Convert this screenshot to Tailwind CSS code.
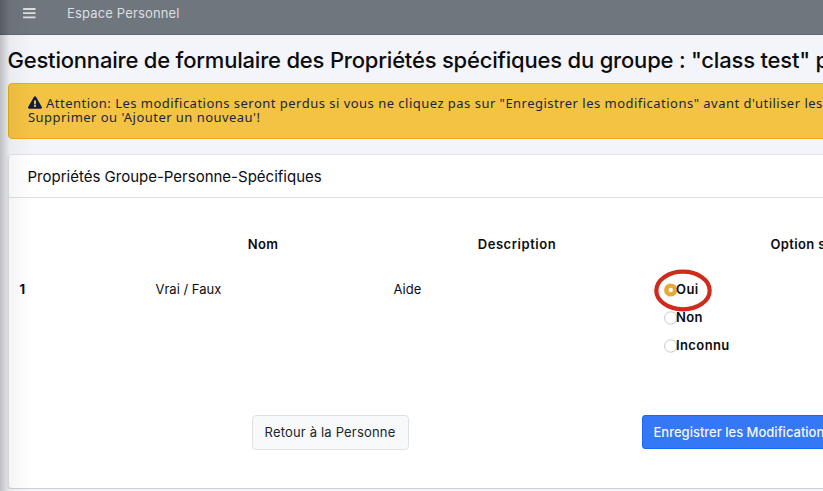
<!DOCTYPE html>
<html lang="fr">
<head>
<meta charset="utf-8">
<title>Espace Personnel</title>
<script src="https://cdn.jsdelivr.net/npm/@tailwindcss/browser@4"></script>
</head>
<body class="relative h-[491px] w-[823px] overflow-hidden bg-[#f4f5fa] font-['Inter',sans-serif] text-[#0b0c0f]">
<header class="flex h-[35px] items-start border-b border-[#63696f] bg-[#6f767d] pl-[23px] pt-[5px] text-[#dcdee0]">
  <svg class="mt-[3px] h-[12px] w-[13px]" viewBox="0 0 13 12" fill="currentColor"><rect y="0" width="12.6" height="1.9" rx=".4"/><rect y="4.2" width="12.6" height="1.9" rx=".4"/><rect y="8.4" width="12.6" height="1.9" rx=".4"/></svg>
  <span class="ml-[31px] whitespace-nowrap text-[13px] leading-[17px] tracking-[0.15px]">Espace Personnel</span>
</header>
<main class="w-[823px] overflow-hidden pl-[7.500px]">
  <h1 class="h-[48px] whitespace-nowrap pt-[11px] text-[22px] font-medium leading-[28px] tracking-[-0.2px]">Gestionnaire de formulaire des Propriétés spécifiques du groupe : "class test" pour</h1>
  <div class="h-[56px] w-[1000px] rounded border border-[#e9b10d] bg-[#f4c344] pl-[19.500px] pt-[12px] font-['Noto_Sans',sans-serif] text-[13px] leading-[14px] text-[#1b2542]">
    <div class="flex whitespace-nowrap"><svg class="mr-[4px] h-[13px] w-[14px] shrink-0" viewBox="0 0 576 512" fill="#101c46"><path d="M569.5 440c18.500 32-4.700 72-41.600 72H48.100c-36.900 0-60-40.100-41.600-72L246.400 24c18.500-32 64.700-32 83.200 0l239.900 416zM288 354c-25.400 0-46 20.600-46 46s20.600 46 46 46 46-20.600 46-46-20.600-46-46-46zm-43.700-165.300l7.400 136c.4 6.400 5.600 11.300 12 11.300h48.500c6.400 0 11.600-5 12-11.300l7.400-136c.4-6.900-5.100-12.700-12-12.700h-63.400c-6.900 0-12.300 5.800-11.900 12.700z"/></svg><span class="tracking-[0.48px]">Attention: Les modifications seront perdus si vous ne cliquez pas sur "Enregistrer les modifications" avant d'utiliser les</span></div>
    <div class="tracking-[0.46px]">Supprimer ou 'Ajouter un nouveau'!</div>
  </div>
  <section class="mt-[15px] h-[335px] w-[1000px] rounded border border-[#e3e4e8] border-b-[#cfd0d5] bg-white shadow-[0_1px_2px_#00000022]">
    <h2 class="h-[43px] border-b border-[#dddfe1] pl-[19px] pt-[11.500px] text-[15px] leading-[20px]">Propriétés Groupe-Personne-Spécifiques</h2>
    <div class="grid grid-cols-[136px_237px_270px_340px] pt-[36px] text-[13px] leading-[20px]">
      <div></div>
      <div class="text-center font-semibold tracking-[0.4px]">Nom</div>
      <div class="pl-px text-center font-semibold tracking-[0.55px]">Description</div>
      <div class="whitespace-nowrap pl-[119px] font-semibold tracking-[0.35px]">Option sélectionnée</div>
      <div class="pl-[11px] pt-[25px] font-bold">1</div>
      <div class="pl-[11px] pt-[25px]">Vrai / Faux</div>
      <div class="pl-[12px] pt-[25px]">Aide</div>
      <div class="relative flex flex-col gap-[8px] pl-[12.500px] pt-[25px] font-semibold tracking-[0.4px]">
        <svg class="absolute left-[1px] top-[15px] h-[43px] w-[60px]" viewBox="0 0 60 43" fill="none"><ellipse cx="30" cy="21.500" rx="26.700" ry="18.800" stroke="#cf2b1d" stroke-width="4.200"/></svg>
        <label class="flex items-center"><svg class="-mr-[2px] h-[14px] w-[14px] translate-y-px" viewBox="0 0 14 14"><circle cx="6.700" cy="7" r="6.600" fill="#e6a93b"/><circle cx="6.700" cy="7" r="2.200" fill="#fff"/></svg><span class="relative">Oui</span></label>
        <label class="flex items-center"><svg class="-mr-[2px] h-[14px] w-[14px] translate-y-px" viewBox="0 0 14 14"><circle cx="6.700" cy="7" r="6.200" fill="#fff" stroke="#c9c9c9"/></svg><span class="relative">Non</span></label>
        <label class="flex items-center"><svg class="-mr-[2px] h-[14px] w-[14px] translate-y-px" viewBox="0 0 14 14"><circle cx="6.700" cy="7" r="6.200" fill="#fff" stroke="#c9c9c9"/></svg><span class="relative">Inconnu</span></label>
      </div>
    </div>
    <div class="flex pl-[243px] pt-[60px] text-[13px]">
      <button class="h-[35px] w-[157px] whitespace-nowrap rounded-[4px] border border-[#dfe1e4] bg-[#f8f9fb] tracking-[0.18px] text-[#212529]">Retour à la Personne</button>
      <button class="ml-[233px] h-[34px] w-[230px] whitespace-nowrap rounded-[3px] border border-[#1767f3] bg-[#3478f6] pl-[11px] pt-px text-left font-medium text-[#f3f7ff]">Enregistrer les Modifications</button>
    </div>
  </section>
</main>
<div class="pointer-events-none absolute inset-y-0 left-0 w-[32px] bg-linear-to-r from-black/22 via-black/4 via-30% to-transparent"></div>
</body>
</html>
